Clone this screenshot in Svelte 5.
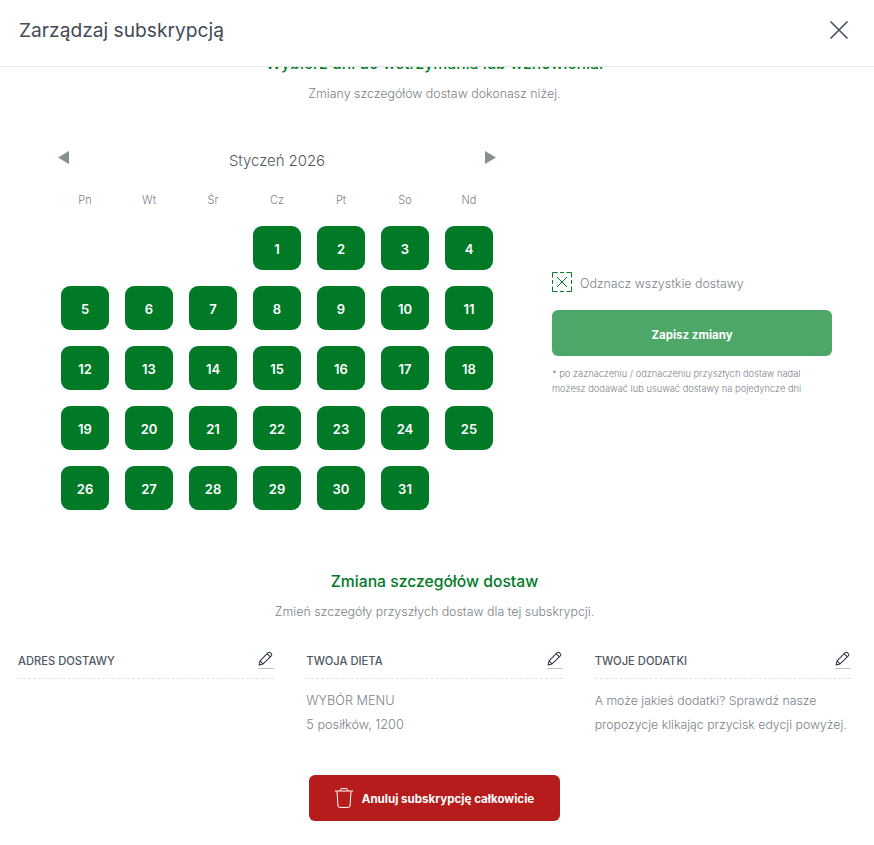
<script>
  const weekdays = ['Pn', 'Wt', 'Śr', 'Cz', 'Pt', 'So', 'Nd'];
  const blanks = [0, 1, 2];
  const days = Array.from({ length: 31 }, (_, i) => i + 1);
</script>

{#snippet pencil()}
  <svg class="pencil" width="15" height="15" viewBox="0 0 16 16" fill="none" stroke="#2b3442" stroke-width="1.1" stroke-linejoin="round">
    <path d="M1.2 14.8l1-4.2 8.6-8.8a1.6 1.6 0 0 1 2.3 0l1.1 1.1a1.6 1.6 0 0 1 0 2.3l-8.8 8.6z" />
    <path d="M2.2 10.6l3.2 3.2M9.8 2.9l3.3 3.3" />
  </svg>
{/snippet}

<div class="modal">
  <header class="head">
    <h1>Zarządzaj subskrypcją</h1>
    <button class="close" aria-label="Zamknij">
      <svg width="20" height="20" viewBox="0 0 20 20" fill="none" stroke="#4a5360" stroke-width="1.7" stroke-linecap="round">
        <path d="M2 2l16 16M18 2L2 18" />
      </svg>
    </button>
  </header>

  <div class="scroll">
    <div class="content">
      <h2 class="top-title">Wybierz dni do wstrzymania lub wznowienia!</h2>
      <p class="sub">Zmiany szczegółów dostaw dokonasz niżej.</p>

      <section class="planner">
        <div class="calendar">
          <div class="month">
            <svg class="arrow" width="11" height="13" viewBox="0 0 11 13"><path d="M11 0v13L0 6.5z" fill="#84918c" /></svg>
            <span>Styczeń 2026</span>
            <svg class="arrow" width="11" height="13" viewBox="0 0 11 13"><path d="M0 0v13l11-6.5z" fill="#84918c" /></svg>
          </div>
          <div class="grid names">
            {#each weekdays as w}
              <span>{w}</span>
            {/each}
          </div>
          <div class="grid days">
            {#each blanks as b}
              <span></span>
            {/each}
            {#each days as d}
              <button class="day">{d}</button>
            {/each}
          </div>
        </div>

        <div class="side">
          <label class="untick">
            <svg width="20" height="20" viewBox="0 0 20 20" fill="none" stroke="#007a27" stroke-width="1">
              <path stroke-dasharray="5 2.5 4 2.5 5 0" d="M.5.5h19M19.5.5v19M19.5 19.5H.5M.5 19.5V.5" />
              <path d="M5 5l10 10M15 5L5 15" />
            </svg>
            <span class="untick-label">Odznacz wszystkie dostawy</span>
          </label>
          <button class="save">Zapisz zmiany</button>
          <p class="note">* po zaznaczeniu / odznaczeniu przyszłych dostaw nadal<br />możesz dodawać lub usuwać dostawy na pojedyncze dni</p>
        </div>
      </section>

      <h2 class="title">Zmiana szczegółów dostaw</h2>
      <p class="sub">Zmień szczegóły przyszłych dostaw dla tej subskrypcji.</p>

      <section class="details">
        <div class="col">
          <div class="col-head"><span>ADRES DOSTAWY</span><span class="edit">{@render pencil()}</span></div>
        </div>
        <div class="col diet">
          <div class="col-head"><span>TWOJA DIETA</span><span class="edit">{@render pencil()}</span></div>
          <p>WYBÓR MENU<br />5 posiłków, 1200</p>
        </div>
        <div class="col">
          <div class="col-head"><span>TWOJE DODATKI</span><span class="edit">{@render pencil()}</span></div>
          <p>A może jakieś dodatki? Sprawdź nasze<br />propozycje klikając przycisk edycji powyżej.</p>
        </div>
      </section>

      <button class="cancel">
        <svg width="18" height="20" viewBox="0 0 18 20" fill="none" stroke="#fff" stroke-width="1">
          <path d="M0 3h18M5.5 3V1.6a1 1 0 0 1 1-1h5a1 1 0 0 1 1 1V3M2 3.5l1 14.5a1.5 1.5 0 0 0 1.5 1.4h9a1.5 1.5 0 0 0 1.5-1.4l1-14.5" />
        </svg>
        <span class="cancel-label">Anuluj subskrypcję całkowicie</span>
      </button>
    </div>
  </div>
</div>

<style>
  :global(body) {
    margin: 0;
    background: #fff;
  }

  .modal {
    width: 874px;
    height: 845px;
    display: flex;
    flex-direction: column;
    overflow: hidden;
    font-family: Inter, "Liberation Sans", sans-serif;
    color: #7c8288;
  }

  .head {
    height: 67px;
    flex: none;
    box-sizing: border-box;
    display: flex;
    align-items: center;
    justify-content: space-between;
    padding: 0 25px 6px 19px;
    background: #fff;
    border-bottom: 1px solid #e6e6e6;
    position: relative;
    z-index: 1;
  }

  h1 {
    margin: 0;
    font-size: 19.2px;
    font-weight: 400;
    color: #434b57;
  }

  .close {
    display: flex;
    padding: 0;
    border: 0;
    background: none;
  }

  .scroll {
    flex: 1;
    overflow: hidden;
  }

  /* the body is scrolled a little, so the first heading sits half under the header */
  .content {
    margin-top: -13px;
    padding-right: 5px;
    display: flex;
    flex-direction: column;
    align-items: center;
  }

  h2 {
    margin: 0;
    font-size: 15.7px;
    line-height: 20px;
    font-weight: 500;
    color: #007a27;
    text-align: center;
  }

  .sub {
    margin: 10px 0 0;
    font-size: 12.4px;
    line-height: 20px;
    font-weight: 300;
    text-align: center;
  }

  .planner {
    width: 100%;
    display: flex;
    margin-top: 45px;
  }

  .calendar {
    width: 552px;
    flex: none;
    box-sizing: border-box;
    padding-left: 53px;
  }

  .month {
    width: 448px;
    display: flex;
    align-items: center;
    justify-content: space-between;
    box-sizing: border-box;
    padding: 0 5px;
    height: 24px;
    font-size: 14.9px;
    font-weight: 300;
    color: #4f5761;
  }

  .month .arrow {
    margin-top: -7px;
  }

  .grid {
    display: grid;
    grid-template-columns: repeat(7, 48px);
    column-gap: 16px;
    margin-left: 8px;
  }

  .names {
    margin-top: 18px;
    height: 18px;
    line-height: 18px;
    font-size: 11px;
    font-weight: 300;
    text-align: center;
  }

  .days {
    margin-top: 17px;
    row-gap: 16px;
  }

  .day {
    height: 44px;
    padding: 2px 0 0;
    border: 0;
    border-radius: 9px;
    background: #007a27;
    color: #fff;
    font-family: inherit;
    font-size: 13px;
    font-weight: 600;
  }

  .side {
    width: 280px;
    padding-top: 123px;
  }

  .untick {
    display: flex;
    align-items: center;
    gap: 8px;
    font-size: 12.4px;
    font-weight: 300;
    height: 20px;
  }

  .untick-label {
    padding-top: 2px;
  }

  .save {
    width: 280px;
    height: 46px;
    margin-top: 18px;
    padding: 3px 0 0;
    display: block;
    border: 0;
    border-radius: 6px;
    background: #4da768;
    color: #fff;
    font-family: inherit;
    font-size: 11.5px;
    font-weight: 700;
  }

  .note {
    margin: 10px 0 0;
    font-size: 9.3px;
    line-height: 15px;
    font-weight: 300;
    white-space: nowrap;
  }

  .title {
    margin-top: 62px;
  }

  .details {
    width: 100%;
    box-sizing: border-box;
    padding: 0 18px;
    display: grid;
    grid-template-columns: repeat(3, 1fr);
    column-gap: 32px;
    margin-top: 27px;
    height: 114px;
  }

  .col-head {
    display: flex;
    align-items: flex-start;
    justify-content: space-between;
    height: 30px;
    padding-top: 2px;
    box-sizing: border-box;
    border-bottom: 1px dashed #e2e2e2;
    font-size: 11.2px;
    line-height: 20px;
    font-weight: 500;
    color: #4e5661;
  }

  .edit {
    display: flex;
    width: 16px;
    height: 20px;
    margin-top: -2px;
    border-bottom: 1px solid #bfc3c8;
    box-sizing: border-box;
    justify-content: flex-start;
    align-items: flex-end;
    padding-bottom: 2px;
  }

  .col p {
    margin: 10px 0 0;
    font-size: 12.3px;
    line-height: 24px;
    font-weight: 300;
    white-space: nowrap;
  }

  .diet p {
    font-size: 12.7px;
  }

  .cancel {
    width: 251px;
    height: 46px;
    margin: 12px 0 0;
    display: flex;
    align-items: center;
    justify-content: center;
    gap: 9px;
    border: 0;
    border-radius: 6px;
    background: #b71c1c;
    color: #fff;
    font-family: inherit;
    font-size: 11.6px;
    font-weight: 700;
  }

  .cancel-label {
    padding-top: 2px;
  }
</style>
